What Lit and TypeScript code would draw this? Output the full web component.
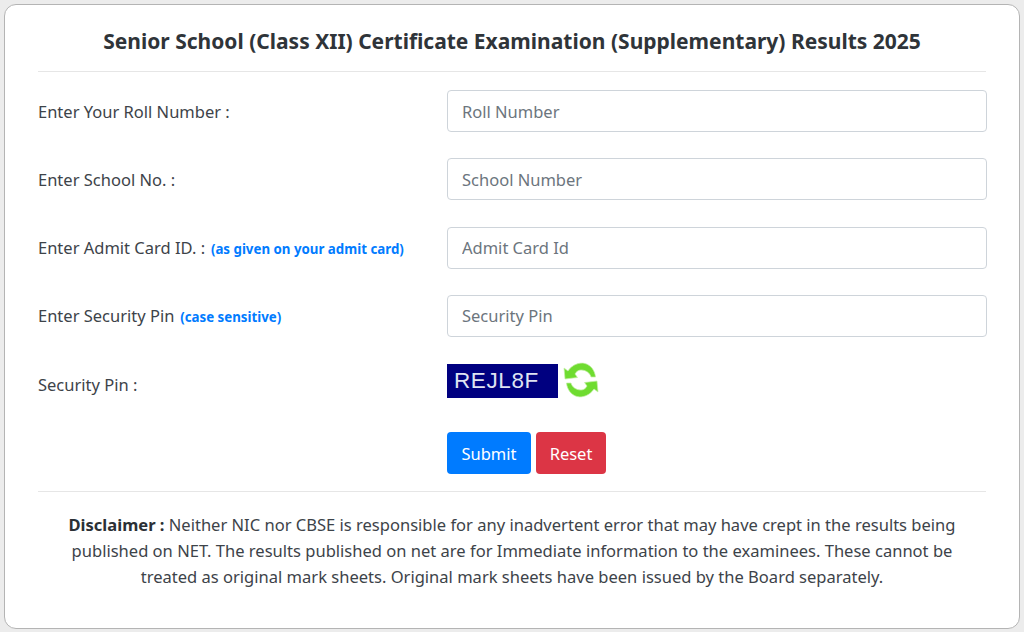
import { LitElement, html, css, svg } from "lit";
import { customElement } from "lit/decorators.js";

@customElement("app-root")
export class AppRoot extends LitElement {
  static styles = css`
    :host {
      display: block;
      width: 1024px;
      height: 632px;
      box-sizing: border-box;
      padding: 4px 4px 3px 4px;
      background: #ececec;
      font-family: "Noto Sans", "Open Sans", sans-serif;
      color: #343a40;
      overflow: hidden;
    }
    .card {
      box-sizing: border-box;
      height: 625px;
      background: #fff;
      border: 1px solid #b4b4b4;
      border-radius: 12px;
      padding: 0 33px;
      display: flex;
      flex-direction: column;
    }
    h1 {
      margin: 0;
      height: 67px;
      box-sizing: border-box;
      padding-top: 21px;
      border-bottom: 1px solid #e6e6e6;
      text-align: center;
      font-size: 21px;
      line-height: 30px;
      font-weight: 700;
      color: #2f3439;
      white-space: nowrap;
    }
    .form {
      display: flex;
      flex-direction: column;
      gap: 26.3px;
      padding-top: 18px;
    }
    .row {
      display: grid;
      grid-template-columns: 409px 540px;
      align-items: center;
      height: 42px;
    }
    .label {
      font-size: 16.5px;
      color: #3d4349;
      white-space: nowrap;
    }
    .note {
      font-size: 13.3px;
      font-weight: 700;
      color: #007bff;
      margin-left: 1.5px;
    }
    .field {
      box-sizing: border-box;
      height: 42px;
      border: 1px solid #ced4da;
      border-radius: 4px;
      padding: 0 14px;
      font-size: 16.5px;
      color: #6c757d;
      display: flex;
      align-items: center;
      width: 100%;
      background: #fff;
      font-family: inherit;
      outline: none;
    }
    .field::placeholder { color: #6c757d; opacity: 1; }
    .captcha {
      display: flex;
      align-items: flex-end;
      gap: 5px;
      height: 36px;
      align-self: start;
      margin-top: -1.5px;
    }
    .code {
      box-sizing: border-box;
      width: 111px;
      height: 34px;
      background: #000080;
      color: #dfe3f2;
      font-family: "Liberation Sans", sans-serif;
      font-size: 22.5px;
      line-height: 33px;
      padding-left: 7px;
      letter-spacing: 0.6px;
    }
    .actions {
      display: flex;
      gap: 5px;
      padding-left: 409px;
      padding-top: 0.6px;
    }
    button {
      height: 42px;
      border: none;
      border-radius: 4px;
      color: #fff;
      font-family: inherit;
      font-size: 16.5px;
      padding: 0;
    }
    .submit { width: 84px; background: #007bff; }
    .reset { width: 70px; background: #dc3545; }
    .foot {
      margin-top: 17px;
      border-top: 1px solid #e6e6e6;
      padding: 20px 0 0;
      text-align: center;
      font-size: 16.55px;
      line-height: 26px;
      color: #3d4349;
      white-space: nowrap;
    }
    .foot b { color: #2b3035; }
  `;

  private row(label: unknown, placeholder: string) {
    return html`<div class="row">
      <div class="label">${label}</div>
      <input class="field" placeholder=${placeholder} />
    </div>`;
  }

  private icon() {
    const arc = "M1 6 L5 9 C9 3 16 0 22 1.5 C28 3 32 9 32.5 15 L28 15 C27 11 23 8 18 8 C15 8 13 10 12 12 L14.5 15.5 L2 17 Z";
    return html`<svg width="36" height="36" viewBox="0 0 36 36" aria-hidden="true">
      ${svg`<g fill="#6fdc30" stroke="#c4efa6" stroke-width="0.7" stroke-linejoin="round">
        <path d=${arc}/>
        <path d=${arc} transform="rotate(180 18 18)"/>
      </g>`}
    </svg>`;
  }

  render() {
    return html`<div class="card">
      <h1>Senior School (Class XII) Certificate Examination (Supplementary) Results 2025</h1>
      <div class="form">
        ${this.row("Enter Your Roll Number :", "Roll Number")}
        ${this.row("Enter School No. :", "School Number")}
        ${this.row(html`Enter Admit Card ID. : <span class="note">(as given on your admit card)</span>`, "Admit Card Id")}
        ${this.row(html`Enter Security Pin <span class="note">(case sensitive)</span>`, "Security Pin")}
        <div class="row">
          <div class="label">Security Pin :</div>
          <div class="captcha"><div class="code">REJL8F</div>${this.icon()}</div>
        </div>
        <div class="actions">
          <button class="submit">Submit</button>
          <button class="reset">Reset</button>
        </div>
      </div>
      <div class="foot">
        <b>Disclaimer :</b> Neither NIC nor CBSE is responsible for any inadvertent error that may have crept in the results being<br />
        published on NET. The results published on net are for Immediate information to the examinees. These cannot be<br />
        treated as original mark sheets. Original mark sheets have been issued by the Board separately.
      </div>
    </div>`;
  }
}
